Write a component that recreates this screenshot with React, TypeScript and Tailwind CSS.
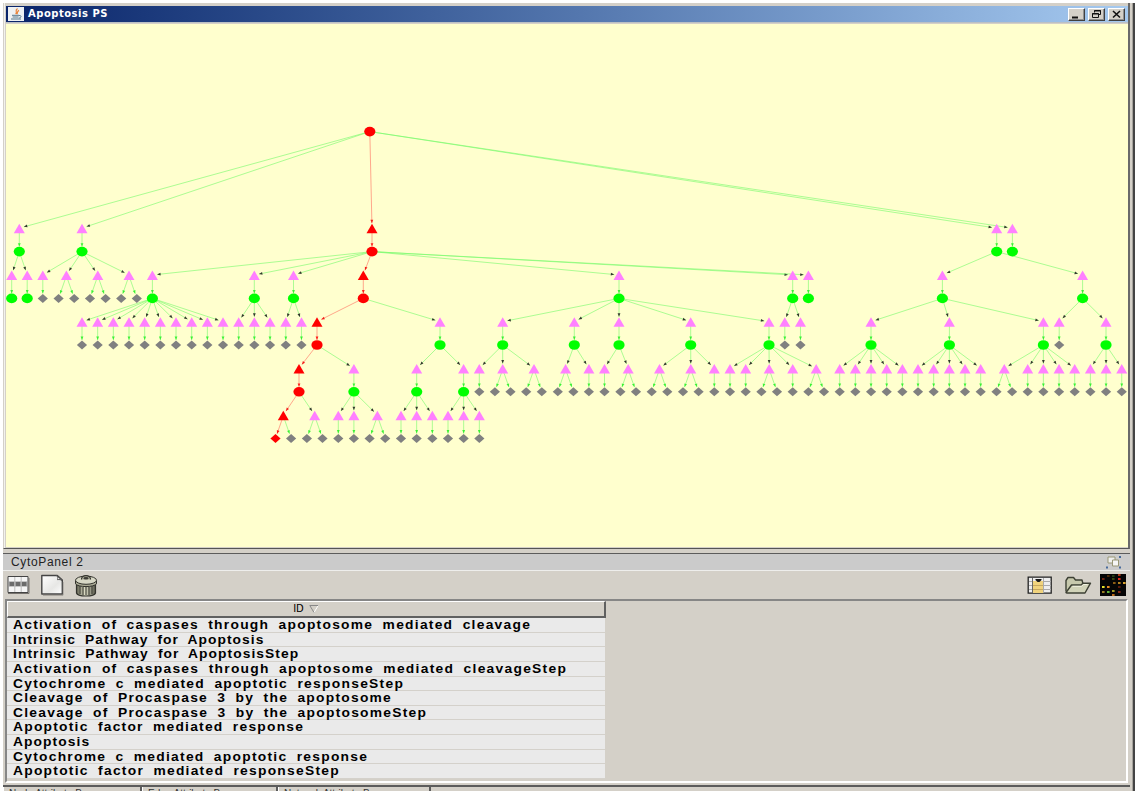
import React from "react";

type Shape = "circle" | "diamond";
interface Step { x: number; hot?: boolean; kids: Item[] }
interface Item { x: number; shape: Shape; hot?: boolean; steps: Step[] }

const c = (x: number, steps: Step[] = [], hot = false): Item => ({ x, shape: "circle", steps, hot });
const d = (x: number, hot = false): Item => ({ x, shape: "diamond", steps: [], hot });
const t = (x: number, kids: Item[] = [d(x)], hot = false): Step => ({ x, kids, hot });
const pair = (x: number): Step => t(x, [d(x - 7.8), d(x + 7.8)]);
const run = (x: number, n: number): Step[] => Array.from({ length: n }, (_, i) => t(x + i * 15.67));

const root: Item = c(369.8, [
  t(19.3, [c(19.3, [t(11.7, [c(11.7)]), t(27.2, [c(27.2)])])]),
  t(82, [c(82, [t(42.8), pair(66.4), pair(97.8), pair(129)])]),
  t(372, [c(372, [
    t(152.4, [c(152.4, run(82, 10))]),
    t(254.3, [c(254.3, run(238.7, 3))]),
    t(293.5, [c(293.5, run(285.8, 2))]),
    t(363.3, [c(363.3, [
      t(317, [c(317, [
        t(299, [c(299, [t(283.3, [d(275.5, true), d(291.1)], true), pair(314.7)], true)], true),
        t(353.9, [c(353.9, [t(338.3), t(353.9), pair(377.4)])]),
      ], true)], true),
      t(440, [c(440, [t(416.7, [c(416.7, run(401, 3))]), t(463.6, [c(463.6, run(448, 3))])])]),
    ], true)], true),
    t(619, [c(619, [
      t(502.7, [c(502.7, [t(479.3), pair(502.7), pair(534)])]),
      t(574.3, [c(574.3, [pair(565.6), t(588.9)])]),
      t(619, [c(619, [t(604.5), pair(628.2)])]),
      t(690.7, [c(690.7, [pair(659.5), pair(690.8), t(714.3)])]),
      t(769, [c(769, [t(730), t(745.7), pair(769.2), t(792.7), pair(816.2)])]),
    ])]),
    t(792.7, [c(792.7, run(784.8, 2))]),
    t(808.4, [c(808.4)]),
  ], true)], true),
  t(996.7, [c(996.7, [
    t(942.4, [c(942.4, [
      t(871, [c(871, run(839.7, 5))]),
      t(949.4, [c(949.4, run(918, 5))]),
      t(1043.4, [c(1043.4, [pair(1004.3), ...run(1027.7, 4)])]),
    ])]),
    t(1082.6, [c(1082.6, [t(1059.2), t(1106, [c(1106, run(1090.4, 3))])])]),
  ])]),
  t(1012.4, [c(1012.4)]),
], true);

const stepY = [229, 275.8, 322.5, 369.3, 416];
const itemY = [251.6, 298.4, 345, 391.8, 438.5];

function Edge({ x1, y1, x2, y2, hot, head }: { x1: number; y1: number; x2: number; y2: number; hot: boolean; head: string }) {
  const len = Math.hypot(x2 - x1, y2 - y1);
  const ux = (x2 - x1) / len, uy = (y2 - y1) / len;
  const ex = x2 - ux * 4.8, ey = y2 - uy * 5;
  const bx = ex - ux * 3.4, by = ey - uy * 3.4;
  return (
    <g>
      <line x1={x1} y1={y1} x2={ex} y2={ey} stroke={hot ? "#ff6f60" : "#76fb6b"} strokeWidth="1" opacity=".6" />
      <polygon points={`${ex},${ey} ${bx - uy * 1.4},${by + ux * 1.4} ${bx + uy * 1.4},${by - ux * 1.4}`} fill={head} opacity=".85" />
    </g>
  );
}

function draw(item: Item, y: number, level: number, edges: React.ReactNode[], marks: React.ReactNode[], id: string) {
  const fill = item.hot ? "#ff0000" : item.shape === "circle" ? "#00ff00" : "#808080";
  marks.push(item.shape === "circle"
    ? <ellipse key={id} cx={item.x} cy={y} rx="5.6" ry="4.8" fill={fill} />
    : <path key={id} d={`M${item.x - 5.1} ${y}L${item.x} ${y - 4.5}L${item.x + 5.1} ${y}L${item.x} ${y + 4.5}Z`} fill={fill} />);
  item.steps.forEach((s, i) => {
    const sid = `${id}-${i}`;
    const sy = stepY[level];
    edges.push(<Edge key={sid} x1={item.x} y1={y} x2={s.x} y2={sy - 0.8} hot={!!s.hot} head={s.hot ? "#f00000" : "#181818"} />);
    marks.push(<path key={sid} d={`M${s.x} ${sy - 5.3}L${s.x + 5.5} ${sy + 4.2}H${s.x - 5.5}Z`} fill={s.hot ? "#ff0000" : "#ff80ff"} />);
    s.kids.forEach((k, j) => {
      const hot = !!s.hot && !!k.hot;
      edges.push(<Edge key={`${sid}-${j}`} x1={s.x} y1={sy} x2={k.x} y2={itemY[level]} hot={hot} head={hot ? "#ff0000" : "#22f022"} />);
      draw(k, itemY[level], level + 1, edges, marks, `${sid}-${j}`);
    });
  });
}

function Graph() {
  const edges: React.ReactNode[] = [];
  const marks: React.ReactNode[] = [];
  draw(root, 131.6, 0, edges, marks, "n");
  return (
    <svg className="block h-[523px] w-[1122px] bg-[#ffffce]" viewBox="6 24 1122 523">
      {edges}{marks}
    </svg>
  );
}

function TitleButton({ children }: { children: React.ReactNode }) {
  return (
    <button className="h-[13px] w-[17px] border border-t-white border-l-white border-r-[#404040] border-b-[#404040] bg-[#d4d0c8] shadow-[inset_-1px_-1px_0_#909090]">
      <svg viewBox="0 0 15 11" className="block h-[11px] w-[15px]" fill="none" stroke="#111">{children}</svg>
    </button>
  );
}

function TitleBar() {
  return (
    <div className="flex h-[17px] items-center border-b border-[#bcc0c4] bg-linear-to-r from-[#0a246a] to-[#a6caf0] pr-[3px] pl-[2px]">
      <svg viewBox="0 0 16 14" className="h-[14px] w-[16px] bg-[#eef1f3]">
        <path d="M9.5 1.5C6 4.2 10 4.2 7.7 7.2M11 3.4C8.5 4.7 10.2 5.5 8.8 7.2" stroke="#e8833a" strokeWidth="1.2" fill="none" />
        <path d="M4 8.3h7M4.6 10h6M3 12h10M11 8.5c3 0 2.5 2 .2 2.5" stroke="#57788d" fill="none" />
      </svg>
      <span className="ml-[4px] flex-1 font-['DejaVu_Sans',sans-serif] text-[10px] leading-[16px] font-bold tracking-[0.5px] text-white">Apoptosis PS</span>
      <div className="flex items-center">
        <TitleButton><path d="M3 8.5h6" strokeWidth="2" /></TitleButton>
        <div className="ml-[3px] flex gap-[3px]">
          <TitleButton><path d="M5.5 3.5v-2h6v4h-2M5 2h7M3.5 4.5h6v4h-6zM3 5h7" /></TitleButton>
          <TitleButton><path d="M4 2l7 6.5M11 2L4 8.5" strokeWidth="1.6" /></TitleButton>
        </div>
      </div>
    </div>
  );
}

function TableIcon() {
  return (
    <svg viewBox="0 0 23 20" className="h-[20px] w-[23px]">
      <path d="M1 1.5h20v16H1z" fill="#f5f5f5" stroke="#444" />
      <path d="M1.5 6.5h19v5h-19z" fill="#929292" />
      <path d="M3 7h4v4H3zM9 7h4v4H9zM15 7h4v4h-4z" fill="#6b6b6b" />
      <path d="M7.8 2v15M14.2 2v15" stroke="#bcbcbc" />
      <path d="M1 18.5h21V3" stroke="#77736e" fill="none" />
    </svg>
  );
}

function PageIcon() {
  return (
    <svg viewBox="0 0 24 22" className="h-[22px] w-[24px]">
      <defs><linearGradient id="paper" x2="1" y2="1"><stop stopColor="#fff" /><stop offset=".6" stopColor="#e7e7e5" /><stop offset="1" stopColor="#fff" /></linearGradient></defs>
      <path d="M1.8 1.5h15.5l5 4.5v14H1.8z" fill="url(#paper)" stroke="#444" strokeWidth="1.4" strokeLinejoin="round" />
      <path d="M16.5 1.5c1.3 1.2 1.4 2.6 1 4.2 2-.4 3.4 0 4.5.8z" fill="#fff" stroke="#555" />
      <path d="M3 21.2h20V8" fill="none" stroke="#77736e" opacity=".65" />
    </svg>
  );
}

function TrashIcon() {
  return (
    <svg viewBox="0 0 24 23" className="h-[23px] w-[24px]">
      <defs><linearGradient id="can"><stop stopColor="#5e5e4e" /><stop offset=".45" stopColor="#e2e2cb" /><stop offset="1" stopColor="#555548" /></linearGradient></defs>
      <path d="M2.5 10v9c1 4 18 4 19 0v-9z" fill="url(#can)" stroke="#33332d" strokeWidth="1.2" />
      <path d="M6 12v8M9 13v8M12 13v8M15 13v8M18 12v8" stroke="#48483e" strokeWidth="1.2" />
      <path d="M1.5 6.5v3.3c2 3.7 19 3.7 21 0V6.5z" fill="#a9a994" stroke="#33332d" />
      <ellipse cx="12" cy="6.2" rx="10.5" ry="4.1" fill="#d7d7c5" stroke="#33332d" />
      <path d="M7.5 5.5C7 .4 17 .4 16.5 5.5" fill="#b1b19e" stroke="#33332d" strokeWidth="1.2" />
      <ellipse cx="12" cy="4.2" rx="2.6" ry="1.3" fill="#3c3c36" />
    </svg>
  );
}

function ColumnsIcon() {
  return (
    <svg viewBox="0 0 26 19" className="h-[19px] w-[26px]">
      <path d="M1.2 1.2h23v16h-23z" fill="#eee" stroke="#222" strokeWidth="1.3" />
      <path d="M2 5.5h22M2 9.5h22M2 13.5h22M16.5 2v15" stroke="#aaa" />
      <path d="M6 5h10v12H6z" fill="#f0d37d" /><path d="M6 9.5h10M6 13.5h10" stroke="#c7a85f" />
      <path d="M5.5 2v15" stroke="#666" /><path d="M8.5 3h6v1l-2 2h-2l-2-2z" fill="#171717" />
    </svg>
  );
}

function FolderIcon() {
  return (
    <svg viewBox="0 0 28 19" className="h-[19px] w-[28px]">
      <path d="M2 15.5V4.5l2-3h5.5l2 2.5H18l1 4" fill="#c7c9ad" stroke="#3d4034" strokeWidth="1.4" strokeLinejoin="round" />
      <path d="M2 16.5L7.5 9h9.5l2-1.8h7.5L21 17H3z" fill="#d1d3b8" stroke="#3d4034" strokeWidth="1.4" strokeLinejoin="round" />
      <path d="M8.5 10.3h9l2-1.8h4" stroke="#f2f3e1" fill="none" />
    </svg>
  );
}

const cells: [number, number, string][] = [
  [7, 1, "#4b2a08"], [12, 1, "#243c16"], [18, 0, "#a83a1a"], [2, 4, "#6e2413"], [12, 4, "#34450e"], [18, 4, "#db2a20"],
  [13, 8, "#8a5c14"], [18, 8, "#b28220"], [23, 8, "#d9a32e"], [2, 12, "#e4e02a"], [7, 12, "#e48a24"], [18, 12, "#591a0d"],
  [2, 17, "#9a7c20"], [7, 17, "#5caf36"], [12, 16, "#a19824"], [18, 17, "#802918"], [12, 20, "#ba6919"],
];

function HeatIcon() {
  return (
    <svg viewBox="0 0 26 22" className="h-[22px] w-[26px] bg-[#050505]">
      {cells.map(([x, y, fill]) => <rect key={`${x}-${y}`} x={x} y={y} width="2.6" height="2" fill={fill} />)}
    </svg>
  );
}

const rows: [string, string][] = [
  ["Activation of caspases through apoptosome mediated cleavage", "tracking-[1.1px]"],
  ["Intrinsic Pathway for Apoptosis", "tracking-[0.9px]"],
  ["Intrinsic Pathway for ApoptosisStep", "tracking-[0.92px]"],
  ["Activation of caspases through apoptosome mediated cleavageStep", "tracking-[1.115px]"],
  ["Cytochrome c mediated apoptotic responseStep", "tracking-[1.12px]"],
  ["Cleavage of Procaspase 3 by the apoptosome", "tracking-[1.095px]"],
  ["Cleavage of Procaspase 3 by the apoptosomeStep", "tracking-[1.1px]"],
  ["Apoptotic factor mediated response", "tracking-[1.08px]"],
  ["Apoptosis", "tracking-[0.95px]"],
  ["Cytochrome c mediated apoptotic response", "tracking-[1.1px]"],
  ["Apoptotic factor mediated responseStep", "tracking-[1.1px]"],
];

function IdTable() {
  return (
    <div className="w-[599px]">
      <div className="flex h-[17px] items-center justify-center gap-[5px] border-t border-r-2 border-b-2 border-l border-t-white border-r-[#606060] border-b-[#606060] border-l-white bg-[#d4d0c8] font-['DejaVu_Sans',sans-serif] text-[10px] leading-[14px]">
        <span>ID</span>
        <svg viewBox="0 0 10 8" className="h-[8px] w-[10px]" fill="none"><path d="M9.2.5L5 7.5" stroke="#fff" /><path d="M5 7.5L.8.5h8.4" stroke="#888" /></svg>
      </div>
      {rows.map(([name, tracking]) => (
        <div key={name} className="flex h-[14.64px] w-[598px] items-start border-b border-[#d4d1cb] bg-[#eaeaea] pl-[5.5px]">
          <span className={`block origin-left scale-x-[1.15] font-['Liberation_Sans',Arial,sans-serif] text-[12px] leading-[14.6px] font-bold [word-spacing:3.7px] whitespace-nowrap text-black ${tracking}`}>{name}</span>
        </div>
      ))}
    </div>
  );
}

function Tab({ label, width }: { label: string; width: string }) {
  return (
    <div className={`${width} overflow-hidden border-r-2 border-l border-r-[#5c5c5c] border-l-white pt-px pl-[5px] font-['Liberation_Sans',Arial,sans-serif] text-[10px] leading-[12px] whitespace-nowrap text-[#333]`}>{label}</div>
  );
}

export default function App() {
  return (
    <div className="h-[795px] w-[1135px] overflow-hidden bg-white pt-[3px] pl-[3px]">
      <div className="flex h-[788px] bg-[#d4d0c8]">
        <div className="flex w-[1127px] flex-col">
          <div className="h-[546px] border-r-2 border-b border-l border-r-[#6a6a6a] border-b-[#555] border-l-[#d4d0c8]">
            <div className="flex h-[545px] flex-col border-l border-[#f2f2ee] pt-[3px] pl-px">
              <TitleBar />
              <div className="h-px" />
              <Graph />
            </div>
          </div>
          <div className="h-[4px] bg-[#d4d0c8]" />
          <div className="flex h-[18px] items-center border-t border-b border-t-[#5c5c5c] border-b-[#eeeeec] bg-[#cbcbcb] pr-[8px] pl-[8px]">
            <span className="flex-1 font-['Liberation_Sans',Arial,sans-serif] text-[12px] leading-[16px] tracking-[0.65px] text-[#222]">CytoPanel 2</span>
            <svg viewBox="0 0 16 14" className="h-[14px] w-[16px]">
              <path d="M2 2h7v6H2z" fill="#f0f0f0" stroke="#999777" /><path d="M6.5 5h6v6h-6z" fill="#f6f6f6" stroke="#999777" />
              <path d="M13 1h2v2h-2zM0 11.5h2v2H0zM13 11.5h2v2h-2z" fill="#486b9b" />
            </svg>
          </div>
          <div className="flex h-[28px] items-center pr-[4px] pl-[4px]">
            <TableIcon />
            <div className="ml-[10px]"><PageIcon /></div>
            <div className="ml-[10px]"><TrashIcon /></div>
            <div className="ml-auto flex items-center">
              <ColumnsIcon />
              <div className="ml-[11px]"><FolderIcon /></div>
              <div className="ml-[8px]"><HeatIcon /></div>
            </div>
          </div>
          <div className="h-[184px] px-[2px]">
            <div className="h-[184px] border-t-2 border-r-2 border-b-2 border-l-2 border-t-[#868686] border-r-white border-b-white border-l-[#868686] bg-[#d4d0c8]">
              <IdTable />
            </div>
          </div>
          <div className="h-[2px]" />
          <div className="flex h-[6px] overflow-hidden border-t-2 border-[#5c5c5c]">
            <Tab label="Node Attribute Browser" width="w-[139px]" />
            <Tab label="Edge Attribute Browser" width="w-[136px]" />
            <Tab label="Network Attribute Browser" width="w-[153px]" />
          </div>
        </div>
        <div className="w-[3px] border-r border-[#a5a29c] bg-[#d4d0c8]" />
        <div className="w-[2px] bg-[#444]" />
      </div>
    </div>
  );
}
